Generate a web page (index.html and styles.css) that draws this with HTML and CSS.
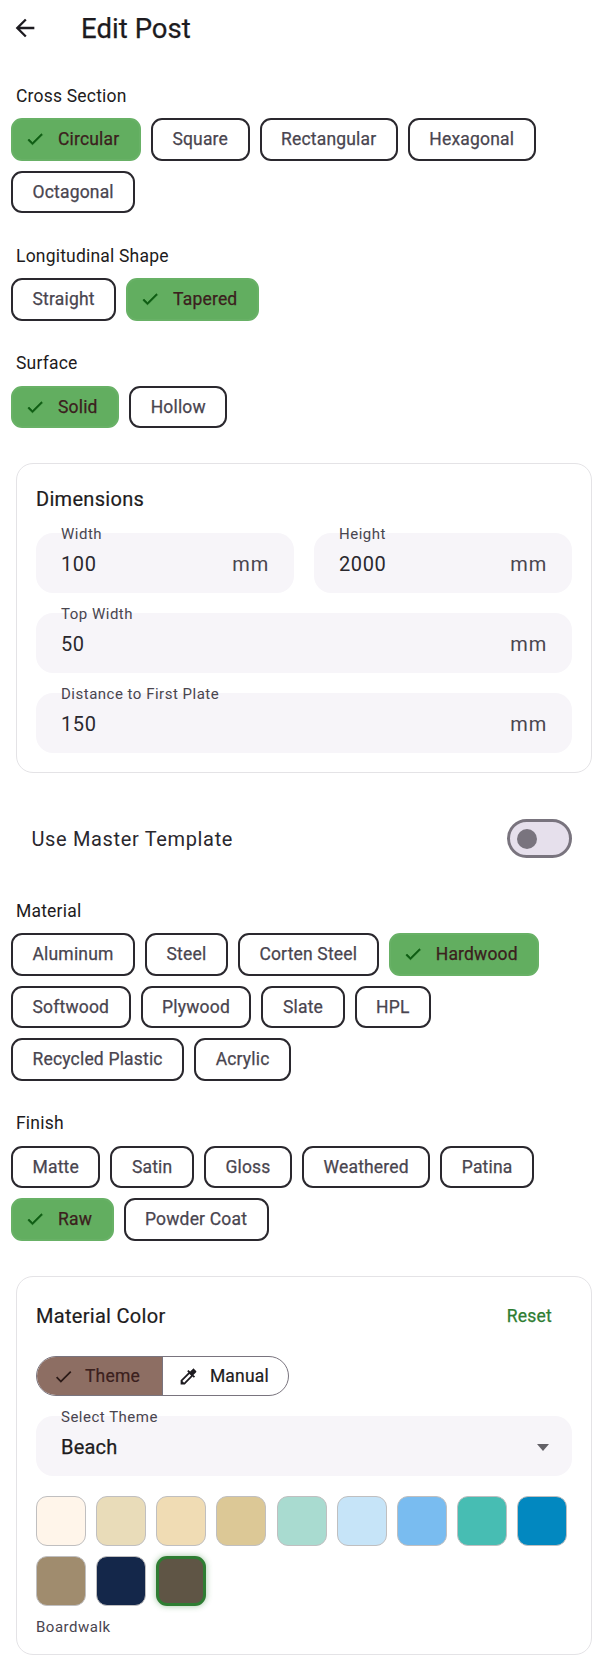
FILE: index.html
```html
<!DOCTYPE html>
<html lang="en">
<head>
<meta charset="utf-8">
<title>Edit Post</title>
<link rel="stylesheet" href="styles.css">
</head>
<body>
<svg class="defs" width="0" height="0" aria-hidden="true">
  <symbol id="check" viewBox="0 0 24 24"><path d="M9 16.17L4.83 12l-1.42 1.41L9 19 21 7l-1.41-1.41z"/></symbol>
</svg>
<header class="appbar">
  <svg class="back" viewBox="0 0 24 24"><path d="M20 11H7.83l5.59-5.59L12 4l-8 8 8 8 1.41-1.41L7.83 13H20v-2z"/></svg>
  <h1 class="title">Edit Post</h1>
</header>
<main class="page">
  <section class="group first">
    <h2 class="label">Cross Section</h2>
    <div class="chips">
      <span class="chip on"><svg class="tick"><use href="#check"/></svg>Circular</span>
      <span class="chip">Square</span>
      <span class="chip">Rectangular</span>
      <span class="chip">Hexagonal</span>
      <span class="chip">Octagonal</span>
    </div>
  </section>
  <section class="group">
    <h2 class="label">Longitudinal Shape</h2>
    <div class="chips">
      <span class="chip">Straight</span>
      <span class="chip on"><svg class="tick"><use href="#check"/></svg>Tapered</span>
    </div>
  </section>
  <section class="group">
    <h2 class="label">Surface</h2>
    <div class="chips">
      <span class="chip on"><svg class="tick"><use href="#check"/></svg>Solid</span>
      <span class="chip">Hollow</span>
    </div>
  </section>

  <section class="card dims">
    <h2 class="card-title">Dimensions</h2>
    <div class="fields">
      <div class="pair">
        <div class="field"><span class="float">Width</span><span class="value">100</span><span class="unit">mm</span></div>
        <div class="field"><span class="float">Height</span><span class="value">2000</span><span class="unit">mm</span></div>
      </div>
      <div class="field"><span class="float">Top Width</span><span class="value">50</span><span class="unit">mm</span></div>
      <div class="field"><span class="float">Distance to First Plate</span><span class="value">150</span><span class="unit">mm</span></div>
    </div>
  </section>

  <div class="toggle-row">
    <span class="toggle-label">Use Master Template</span>
    <span class="switch"><span class="thumb"></span></span>
  </div>

  <section class="group after-toggle">
    <h2 class="label">Material</h2>
    <div class="chips">
      <span class="chip">Aluminum</span>
      <span class="chip">Steel</span>
      <span class="chip">Corten Steel</span>
      <span class="chip on"><svg class="tick"><use href="#check"/></svg>Hardwood</span>
      <span class="chip">Softwood</span>
      <span class="chip">Plywood</span>
      <span class="chip">Slate</span>
      <span class="chip">HPL</span>
      <span class="chip">Recycled Plastic</span>
      <span class="chip">Acrylic</span>
    </div>
  </section>
  <section class="group">
    <h2 class="label">Finish</h2>
    <div class="chips">
      <span class="chip">Matte</span>
      <span class="chip">Satin</span>
      <span class="chip">Gloss</span>
      <span class="chip">Weathered</span>
      <span class="chip">Patina</span>
      <span class="chip on"><svg class="tick"><use href="#check"/></svg>Raw</span>
      <span class="chip">Powder Coat</span>
    </div>
  </section>

  <section class="card color">
    <div class="color-head">
      <h2 class="card-title">Material Color</h2>
      <span class="reset">Reset</span>
    </div>
    <div class="segments">
      <span class="seg seg-on"><svg class="seg-icon"><use href="#check"/></svg>Theme</span>
      <span class="seg"><svg class="seg-icon" viewBox="0 0 24 24"><path d="M20.71 5.63l-2.34-2.34c-.39-.39-1.02-.39-1.41 0l-3.12 3.12-1.93-1.91-1.41 1.41 1.42 1.42L3 16.25V21h4.75l8.92-8.92 1.42 1.42 1.41-1.41-1.92-1.92 3.12-3.12c.4-.4.4-1.03.01-1.42zM6.92 19L5 17.08l8.06-8.06 1.92 1.92L6.92 19z"/></svg>Manual</span>
    </div>
    <div class="field select"><span class="float">Select Theme</span><span class="value strong">Beach</span><svg class="caret" viewBox="0 0 12 7"><path d="M0 0h12L6 7z"/></svg></div>
    <div class="swatches">
      <span class="swatch s1"></span><span class="swatch s2"></span><span class="swatch s3"></span>
      <span class="swatch s4"></span><span class="swatch s5"></span><span class="swatch s6"></span>
      <span class="swatch s7"></span><span class="swatch s8"></span><span class="swatch s9"></span>
      <span class="swatch s10"></span><span class="swatch s11"></span><span class="swatch s12 picked"></span>
    </div>
    <p class="swatch-name">Boardwalk</p>
  </section>
</main>
</body>
</html>
```

FILE: styles.css
```css
* { box-sizing: border-box; }
html, body { margin: 0; padding: 0; background: #fff; }
body { font-family: Roboto, "Liberation Sans", sans-serif; color: #1d1b20; width: 607px; }
.defs { position: absolute; }

.appbar { display: flex; align-items: center; height: 56px; padding-left: 11px; }
.back { width: 28px; height: 28px; fill: #1d1b20; flex: none; }
.title { margin: 2px 0 0 42px; font-size: 27.5px; line-height: 34px; font-weight: 400; letter-spacing: .05px; -webkit-text-stroke: .25px #1d1b20; }

.page { padding: 0 15px 10px 16px; }
.group { margin-top: 30.5px; }
.group.first { margin-top: 27.5px; }
.group.after-toggle { margin-top: 40.5px; }
.label { margin: 0 0 10px; font-size: 17.5px; line-height: 24.5px; font-weight: 400; letter-spacing: .2px; }

.chips { display: flex; flex-wrap: wrap; gap: 10px; margin-left: -5px; }
.chip {
  display: inline-flex; align-items: center; height: 42.5px; padding: 0 19.5px;
  border: 2px solid #2a282e; border-radius: 11px;
  font-size: 17.5px; font-weight: 400; letter-spacing: .18px; color: #49454f; -webkit-text-stroke: .25px #49454f;
}
.chip.on { padding-left: 12px; background: #62ae60; border-color: #68b166; color: #3b201d; -webkit-text-stroke: .25px #3b201d; }
.tick { width: 20px; height: 20px; fill: #0d5c12; stroke: #0d5c12; stroke-width: .7px; margin-right: 13px; flex: none; }

.card { border: 1.2px solid #e4e3e6; border-radius: 17px; padding: 0 19px; }
.dims { margin-top: 35px; padding-top: 22px; padding-bottom: 19px; }
.card-title { margin: 0; font-size: 20px; line-height: 26px; font-weight: 400; letter-spacing: .3px; -webkit-text-stroke: .2px #1d1b20; }
.fields { display: flex; flex-direction: column; gap: 20px; margin-top: 21px; }
.pair { display: flex; gap: 20px; }
.pair .field { flex: 1 1 0; }
.field {
  position: relative; display: flex; align-items: center; justify-content: space-between;
  height: 60px; padding: 2px 25px 0 25px; background: #f7f5f9; border-radius: 17px;
}
.float {
  position: absolute; left: 25px; top: -9.5px; font-size: 15px; line-height: 20px;
  letter-spacing: .5px; color: #49454f;
}
.value { font-size: 20px; line-height: 26px; letter-spacing: .6px; color: #2a282e; }
.value.strong { color: #1d1b20; letter-spacing: .2px; -webkit-text-stroke: .25px #1d1b20; }
.unit { font-size: 20px; line-height: 26px; letter-spacing: .8px; color: #49454f; }

.toggle-row { display: flex; align-items: center; justify-content: space-between; margin-top: 46px; padding: 0 20px 0 15.5px; }
.toggle-label { font-size: 20px; line-height: 26px; letter-spacing: .65px; color: #2a282e; }
.switch {
  display: flex; align-items: center; width: 65px; height: 39px; padding-left: 6.5px;
  background: #e6e0ec; border: 3px solid #79747e; border-radius: 20px;
}
.thumb { display: block; width: 20px; height: 20px; border-radius: 50%; background: #79747e; }

.color { margin-top: 35.5px; padding-bottom: 17px; }
.color-head { display: flex; align-items: center; justify-content: space-between; height: 62px; padding-top: 16px; padding-right: 20px; margin-bottom: 17px; }
.reset { font-size: 17.5px; font-weight: 400; letter-spacing: .24px; color: #2e7d32; -webkit-text-stroke: .25px #2e7d32; }
.segments { display: inline-flex; vertical-align: top; height: 40px; border: 1.2px solid #79747e; border-radius: 20px; overflow: hidden; }
.seg { display: flex; align-items: center; font-size: 17.5px; font-weight: 400; letter-spacing: .18px; padding: 0 19px 0 15px; color: #1d1b20; -webkit-text-stroke: .2px #1d1b20; }
.seg + .seg { border-left: 1.2px solid #79747e; }
.seg-on { background: #8d6e63; color: #3b201d; padding-left: 16px; padding-right: 22px; -webkit-text-stroke: .2px #3b201d; }
.seg-icon { width: 21px; height: 21px; margin-right: 11px; fill: #1d1b20; flex: none; }
.seg-on .seg-icon { fill: #2b1a17; }
.select { margin-top: 20px; padding-right: 23px; }
.caret { width: 12px; height: 7px; fill: #636167; }
.swatches { display: flex; flex-wrap: wrap; gap: 10px 10.15px; margin-top: 19.5px; }
.swatch { display: block; width: 50px; height: 50px; border: 1.2px solid #c0bfc0; border-radius: 11px; }
.s1 { background: #fff5ea; } .s2 { background: #e9dcb9; } .s3 { background: #f0dcb4; }
.s4 { background: #dcc896; } .s5 { background: #a9dbd0; } .s6 { background: #c6e4f8; }
.s7 { background: #79bcf0; } .s8 { background: #47bdb3; } .s9 { background: #0288c0; }
.s10 { background: #a08c6e; } .s11 { background: #14274a; } .s12 { background: #5f5545; }
.picked { border: 3px solid #2e7d32; box-shadow: 0 0 6px rgba(46,125,50,.45); }
.swatch-name { margin: 11px 0 0; font-size: 15px; line-height: 20px; letter-spacing: .5px; color: #49454f; }
```
